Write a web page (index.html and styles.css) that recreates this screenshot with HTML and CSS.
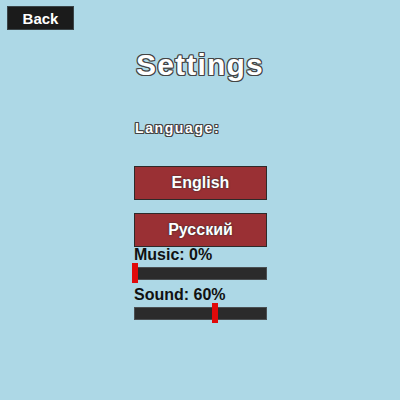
FILE: index.html
```html
<!DOCTYPE html>
<html lang="en">
<head>
    <meta charset="UTF-8">
    <title>Settings</title>
    <link rel="stylesheet" href="styles.css">
</head>
<body>
<button class="back">Back</button>

<div class="settings">
    <h1 class="title">Settings</h1>

    <div class="panel">
        <div class="label">Language:</div>
        <button class="lang first">English</button>
        <button class="lang">Русский</button>

        <div class="volume-label">Music: 0%</div>
        <div class="track">
            <div class="thumb" style="left: -3px"></div>
        </div>

        <div class="volume-label">Sound: 60%</div>
        <div class="track">
            <div class="thumb" style="left: 77px"></div>
        </div>
    </div>
</div>
</body>
</html>
```

FILE: styles.css
```css
*{
    box-sizing: border-box;
}
html, body{
    margin: 0;
    padding: 0;
    background: #add8e6;
    font-family: "Liberation Sans", Arial, sans-serif;
}
body{
    width: 400px;
    height: 400px;
    overflow: hidden;
}
.back{
    display: block;
    margin: 6px 0 0 7px;
    width: 67px;
    height: 24px;
    padding: 0;
    background: #1b1b1b;
    border: 1px solid #3a4448;
    color: white;
    font-family: "Liberation Sans", Arial, sans-serif;
    font-weight: bold;
    font-size: 15px;
}
.settings{
    display: flex;
    flex-direction: column;
    align-items: center;
}
.title{
    margin: 17px 0 0 0;
    font-size: 30px;
    line-height: 36px;
    letter-spacing: 1.2px;
    color: white;
    text-shadow: -1px -1px 0 #444, 1px -1px 0 #444, -1px 1px 0 #444, 1px 1px 0 #444,
        0 1px 0 #444, 0 -1px 0 #444, 1px 0 0 #444, -1px 0 0 #444;
}
.panel{
    width: 133px;
    margin-left: 1px;
    display: flex;
    flex-direction: column;
}
.label{
    margin-top: 37px;
    padding-left: 1px;
    font-size: 14px;
    line-height: 16px;
    font-weight: bold;
    letter-spacing: 1.6px;
    color: white;
    text-shadow: -1px -1px 0 #444, 1px -1px 0 #444, -1px 1px 0 #444, 1px 1px 0 #444,
        0 1px 0 #444, 0 -1px 0 #444, 1px 0 0 #444, -1px 0 0 #444;
}
.lang{
    height: 34px;
    margin-top: 13px;
    padding: 0;
    background: #9a3034;
    border: 1px solid #2e2a2a;
    color: white;
    font-family: "Liberation Sans", Arial, sans-serif;
    font-weight: bold;
    font-size: 16px;
    text-shadow: 0 0 2px #333, 0 0 1px #333;
}
.lang.first{
    margin-top: 30px;
}
.volume-label{
    font-size: 16px;
    line-height: 16px;
    font-weight: bold;
    color: #111;
    margin-top: 7px;
}
.lang + .volume-label{
    margin-top: 0;
}
.track{
    position: relative;
    height: 13px;
    margin-top: 4px;
    background: #2b2b2b;
    border: 1px solid #4a4f52;
}
.thumb{
    position: absolute;
    top: -5px;
    width: 6px;
    height: 20px;
    background: #e10a0a;
}
```
